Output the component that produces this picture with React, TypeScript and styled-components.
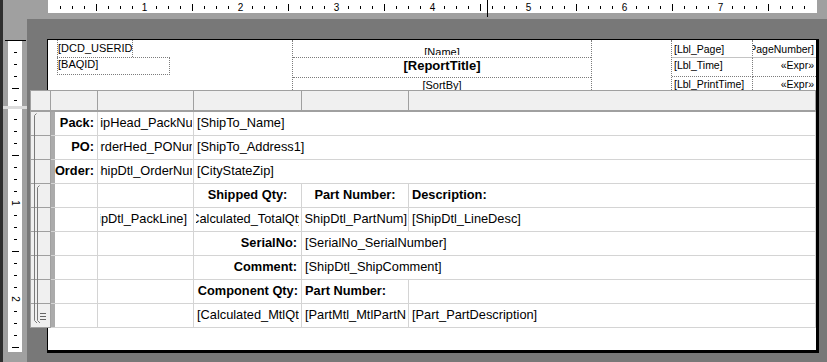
import React from "react";
import styled, { createGlobalStyle, css } from "styled-components";

const GlobalStyle = createGlobalStyle`
  html, body { margin: 0; padding: 0; }
  body {
    background: #a0a0a0;
    font-family: "Liberation Sans", Arial, sans-serif;
    overflow: hidden;
  }
`;

const FONT = `"Liberation Sans", Arial, sans-serif`;

const Screen = styled.div`
  width: 827px;
  height: 362px;
  display: flex;
  background: #a0a0a0;
  overflow: hidden;
`;

const EdgeStrip = styled.div`
  flex: none;
  width: 3px;
  background: #2e2e2e;
`;

const Main = styled.div`
  flex: 1;
  min-width: 0;
  display: flex;
  flex-direction: column;
`;

const TopBar = styled.div`
  flex: none;
  position: relative;
  height: 19px;
  padding-left: 45px;
  box-sizing: border-box;
`;

const HRulerStrip = styled.div`
  width: 769px;
  height: 13px;
  background: #fff;
`;

const RulerSvg = styled.svg`
  display: block;
`;

const CursorMark = styled.div<{ $axis: "x" | "y" }>`
  position: absolute;
  background: #000;
  ${(p) =>
    p.$axis === "x"
      ? css`
          left: 484px;
          top: 0;
          width: 1px;
          height: 17px;
        `
      : css`
          left: 2px;
          top: 21px;
          width: 21px;
          height: 1px;
        `}
`;

const Body = styled.div`
  flex: 1;
  min-height: 0;
  display: flex;
`;

const SideRuler = styled.div`
  flex: none;
  position: relative;
  width: 24px;
  padding-top: 21px;
  box-sizing: border-box;
  display: flex;
  flex-direction: column;
`;

const RulerSection = styled.div<{ $h: number }>`
  margin: 0 5px;
  width: 14px;
  height: ${(p) => p.$h}px;
  background: #fff;
`;

const SectionBreak = styled.div`
  height: 3px;
  background: #dcdcdc;
`;

const Canvas = styled.div`
  flex: 1;
  min-width: 0;
  background: #787878;
  padding: 20px 0 0 20px;
  box-sizing: border-box;
`;

const Page = styled.div`
  width: 772px;
  height: 314px;
  box-sizing: border-box;
  background: #fff;
  border: 1px solid #000;
  border-right-width: 3px;
  border-bottom-width: 3px;
`;

/* ---------- page header band ---------- */

const HeaderBand = styled.div`
  height: 50px;
  display: grid;
  grid-template-columns: 244px 300px 79px 1fr;
  overflow: hidden;
  color: #000;
  font-family: ${FONT};
  font-size: 11px;
  line-height: 13px;
`;

const LeftFields = styled.div`
  padding-left: 9px;
  display: flex;
  flex-direction: column;
  align-items: flex-start;
`;

const FieldBox = styled.div<{ $w: number; $h: number; $boxed?: boolean }>`
  box-sizing: border-box;
  width: ${(p) => p.$w}px;
  height: ${(p) => p.$h}px;
  border-left: 1px dotted #7c7c7c;
  border-right: 1px dotted #7c7c7c;
  display: flex;
  align-items: ${(p) => (p.$boxed ? "flex-start" : "center")};
  white-space: nowrap;
  overflow: hidden;
  ${(p) =>
    p.$boxed &&
    css`
      border-top: 1px dotted #7c7c7c;
      border-bottom: 1px dotted #7c7c7c;
    `}
`;

const CenterBlock = styled.div`
  border-left: 1px dotted #7c7c7c;
  border-right: 1px dotted #7c7c7c;
  display: grid;
  grid-template-rows: 18px 20px 1fr;
`;

const CenterRow = styled.div<{ $rule?: boolean }>`
  box-sizing: border-box;
  overflow: hidden;
  border-bottom: ${(p) => (p.$rule ? "1px dotted #7c7c7c" : "none")};
`;

const CenterText = styled.div<{ $bold?: boolean; $pad: number; $clip?: number }>`
  box-sizing: border-box;
  text-align: center;
  white-space: nowrap;
  overflow: hidden;
  padding-top: ${(p) => p.$pad}px;
  ${(p) => p.$clip && css`height: ${p.$clip}px;`}
  ${(p) =>
    p.$bold &&
    css`
      font-weight: 700;
      font-size: 13px;
      line-height: 16px;
    `}
`;

const InfoGrid = styled.div`
  border-left: 1px dotted #7c7c7c;
  display: grid;
  grid-template-columns: 81px 1fr;
  grid-template-rows: 18px 19px 1fr;
  font-size: 10.5px;
`;

const InfoCell = styled.div<{
  $right?: boolean;
  $rule?: "solid" | "dotted";
  $divider?: boolean;
  $pad: number;
}>`
  box-sizing: border-box;
  overflow: hidden;
  white-space: nowrap;
  display: flex;
  justify-content: ${(p) => (p.$right ? "flex-end" : "flex-start")};
  align-items: flex-start;
  padding: ${(p) => p.$pad}px ${(p) => (p.$right ? 2 : 0)}px 0 ${(p) => (p.$right ? 0 : 2)}px;
  border-right: ${(p) => (p.$divider ? "1px dotted #7c7c7c" : "none")};
  border-bottom: ${(p) =>
    p.$rule === "solid" ? "1px solid #c4c4c4" : p.$rule === "dotted" ? "1px dotted #7c7c7c" : "none"};
`;

const NoShrink = styled.span<{ $nudge?: number }>`
  flex: none;
  ${(p) => p.$nudge && css`margin-right: ${p.$nudge}px;`}
`;

/* ---------- band designer table ---------- */

const TableGrid = styled.div`
  position: relative;
  margin-left: -18px;
  width: 786px;
  box-sizing: border-box;
  display: grid;
  grid-template-columns: 20px 47px 96px 108px 107px 1fr;
  grid-template-rows: 21px repeat(9, 24px);
  border-left: 1px solid #a0a0a0;
  border-top: 1px solid #a0a0a0;
  background: #fff;
  font-family: ${FONT};
  font-size: 12.8px;
  color: #000;
`;

const HeadCell = styled.div`
  box-sizing: border-box;
  background: #f0f0f0;
  border-right: 1px solid #a0a0a0;
  border-bottom: 2px solid #a0a0a0;
`;

const GutterCell = styled.div`
  box-sizing: border-box;
  background: #f0f0f0;
  border-right: 1px solid #a0a0a0;
  border-bottom: 1px solid #a0a0a0;
`;

type Align = "left" | "right" | "center";

const Cell = styled.div<{
  $span?: number;
  $padL: number;
  $padR: number;
  $grip?: boolean;
}>`
  grid-column: span ${(p) => p.$span ?? 1};
  box-sizing: border-box;
  min-width: 0;
  display: flex;
  align-items: center;
  padding: 0 ${(p) => p.$padR}px 2px ${(p) => p.$padL}px;
  border-right: 1px solid #d4d4d4;
  border-bottom: 1px solid #d4d4d4;
  overflow: hidden;
  ${(p) => p.$grip && css`box-shadow: inset 4px 0 0 #ababab;`}
`;

const CellClip = styled.div<{ $align: Align; $bold?: boolean }>`
  flex: 1;
  min-width: 0;
  display: flex;
  justify-content: ${(p) =>
    p.$align === "left" ? "flex-start" : p.$align === "right" ? "flex-end" : "center"};
  overflow: hidden;
  white-space: nowrap;
  font-weight: ${(p) => (p.$bold ? 700 : 400)};
`;

const GutterMarks = styled.svg`
  position: absolute;
  left: 0;
  top: 21px;
  pointer-events: none;
`;

interface CellSpec {
  text?: string;
  align?: Align;
  bold?: boolean;
  span?: number;
  padL?: number;
  padR?: number;
  nudge?: number;
}

const rows: CellSpec[][] = [
  [
    { text: "Pack:", align: "right", bold: true },
    { text: "[ShipHead_PackNum]", align: "center", padL: 2, padR: 1, nudge: 4 },
    { text: "[ShipTo_Name]", align: "left", span: 3 },
  ],
  [
    { text: "PO:", align: "right", bold: true },
    { text: "[OrderHed_PONum]", align: "center", padL: 2, padR: 1, nudge: 2 },
    { text: "[ShipTo_Address1]", align: "left", span: 3 },
  ],
  [
    { text: "Order:", align: "right", bold: true },
    { text: "[ShipDtl_OrderNum]", align: "center", padL: 2, padR: 1 },
    { text: "[CityStateZip]", align: "left", span: 3 },
  ],
  [
    {},
    {},
    { text: "Shipped Qty:", align: "center", bold: true },
    { text: "Part Number:", align: "center", bold: true },
    { text: "Description:", align: "left", bold: true },
  ],
  [
    {},
    { text: "[ShipDtl_PackLine]", align: "right", padL: 2, padR: 6 },
    { text: "[Calculated_TotalQty]", align: "center", padL: 2, padR: 2 },
    { text: "[ShipDtl_PartNum]", align: "right", padL: 3, padR: 1 },
    { text: "[ShipDtl_LineDesc]", align: "left" },
  ],
  [
    {},
    {},
    { text: "SerialNo:", align: "right", bold: true, padR: 4 },
    { text: "[SerialNo_SerialNumber]", align: "left", span: 2 },
  ],
  [
    {},
    {},
    { text: "Comment:", align: "right", bold: true, padR: 4 },
    { text: "[ShipDtl_ShipComment]", align: "left", span: 2 },
  ],
  [
    {},
    {},
    { text: "Component Qty:", align: "right", bold: true, padR: 3 },
    { text: "Part Number:", align: "left", bold: true },
    {},
  ],
  [
    {},
    {},
    { text: "[Calculated_MtlQty]", align: "left", padR: 2 },
    { text: "[PartMtl_MtlPartNum]", align: "left", padR: 2 },
    { text: "[Part_PartDescription]", align: "left" },
  ],
];

/* ---------- rulers ---------- */

function HRulerMarks() {
  const ticks = Array.from({ length: 63 }, (_, i) => i + 1);
  return (
    <RulerSvg width={769} height={13}>
      {ticks.map((k) => {
        const x = 12 * k;
        if (k % 8 === 0)
          return (
            <text key={k} x={x + 0.5} y={11} textAnchor="middle" fontSize={10} fontFamily={FONT} fill="#000">
              {k / 8}
            </text>
          );
        if (k % 4 === 0) return <rect key={k} x={x} y={4} width={1} height={7} fill="#000" />;
        return <rect key={k} x={x} y={6} width={1} height={3} fill="#000" />;
      })}
    </RulerSvg>
  );
}

function VRulerMarks({ height, offset }: { height: number; offset: number }) {
  const ticks: number[] = [];
  for (let k = 1; 12 * k + offset < height; k++) ticks.push(k);
  return (
    <RulerSvg width={14} height={height}>
      {ticks.map((k) => {
        const y = 12 * k + offset;
        if (k % 8 === 0)
          return (
            <text
              key={k}
              x={7}
              y={y}
              textAnchor="middle"
              dominantBaseline="central"
              fontSize={10}
              fontFamily={FONT}
              fill="#000"
              transform={`rotate(90 7 ${y})`}
            >
              {k / 8}
            </text>
          );
        if (k % 4 === 0) return <rect key={k} x={4} y={y} width={7} height={1} fill="#000" />;
        return <rect key={k} x={6} y={y} width={3} height={1} fill="#000" />;
      })}
    </RulerSvg>
  );
}

function BandBrackets() {
  return (
    <GutterMarks width={20} height={216}>
      <g fill="none" stroke="#7a7a7a" strokeWidth={1}>
        <path d="M5.5 1.5 L3.5 3.5 V208.5 L6 211" />
        <path d="M8.5 73.5 L6.5 75.5 V208.5 L9 211" />
        <path d="M9 201.5 H15 M9 204.5 H15 M9 207.5 H15" stroke="#666" />
      </g>
    </GutterMarks>
  );
}

export default function App() {
  return (
    <>
      <GlobalStyle />
      <Screen>
        <EdgeStrip />
        <Main>
          <TopBar>
            <HRulerStrip>
              <HRulerMarks />
            </HRulerStrip>
            <CursorMark $axis="x" />
          </TopBar>
          <Body>
            <SideRuler>
              <RulerSection $h={66}>
                <VRulerMarks height={66} offset={0} />
              </RulerSection>
              <SectionBreak />
              <RulerSection $h={243}>
                <VRulerMarks height={243} offset={-2} />
              </RulerSection>
              <CursorMark $axis="y" />
            </SideRuler>
            <Canvas>
              <Page>
                <HeaderBand>
                  <LeftFields>
                    <FieldBox $w={76} $h={17}>
                      <NoShrink>[DCD_USERID]</NoShrink>
                    </FieldBox>
                    <FieldBox $w={113} $h={18} $boxed>
                      <NoShrink>[BAQID]</NoShrink>
                    </FieldBox>
                  </LeftFields>
                  <CenterBlock>
                    <CenterRow $rule>
                      <CenterText $pad={6} $clip={15}>
                        [Name]
                      </CenterText>
                    </CenterRow>
                    <CenterRow $rule>
                      <CenterText $bold $pad={0}>
                        [ReportTitle]
                      </CenterText>
                    </CenterRow>
                    <CenterRow>
                      <CenterText $pad={1}>[SortBy]</CenterText>
                    </CenterRow>
                  </CenterBlock>
                  <div />
                  <InfoGrid>
                    <InfoCell $divider $rule="solid" $pad={3}>
                      <NoShrink>[Lbl_Page]</NoShrink>
                    </InfoCell>
                    <InfoCell $right $rule="solid" $pad={3}>
                      <NoShrink>[PageNumber]</NoShrink>
                    </InfoCell>
                    <InfoCell $divider $rule="dotted" $pad={1}>
                      <NoShrink>[Lbl_Time]</NoShrink>
                    </InfoCell>
                    <InfoCell $right $rule="dotted" $pad={1}>
                      <NoShrink>«Expr»</NoShrink>
                    </InfoCell>
                    <InfoCell $divider $pad={1}>
                      <NoShrink>[Lbl_PrintTime]</NoShrink>
                    </InfoCell>
                    <InfoCell $right $pad={1}>
                      <NoShrink>«Expr»</NoShrink>
                    </InfoCell>
                  </InfoGrid>
                </HeaderBand>

                <TableGrid>
                  {Array.from({ length: 6 }, (_, i) => (
                    <HeadCell key={`h${i}`} />
                  ))}
                  {rows.map((row, r) => (
                    <React.Fragment key={r}>
                      <GutterCell />
                      {row.map((c, i) => (
                        <Cell
                          key={i}
                          $span={c.span}
                          $padL={c.padL ?? 3}
                          $padR={c.padR ?? 3}
                          $grip={i === 0}
                        >
                          {c.text && (
                            <CellClip $align={c.align ?? "left"} $bold={c.bold}>
                              <NoShrink $nudge={c.nudge}>{c.text}</NoShrink>
                            </CellClip>
                          )}
                        </Cell>
                      ))}
                    </React.Fragment>
                  ))}
                  <BandBrackets />
                </TableGrid>
              </Page>
            </Canvas>
          </Body>
        </Main>
      </Screen>
    </>
  );
}
